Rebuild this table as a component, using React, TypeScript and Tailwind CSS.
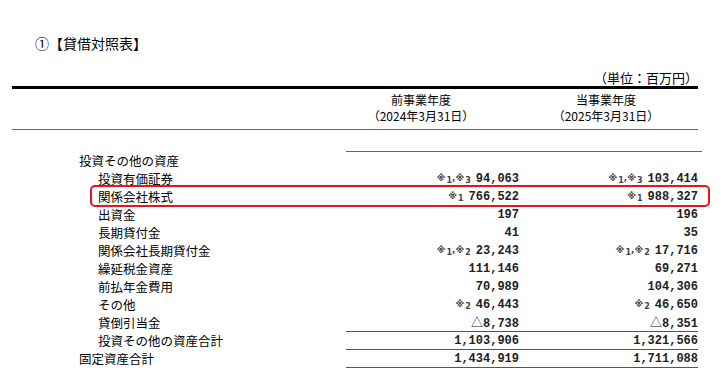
import React from 'react';

type Row = {
  label: string;
  indent?: boolean;
  a?: string;
  an?: string[];
  b?: string;
  bn?: string[];
  line?: boolean;
  mark?: boolean;
};

const rows: Row[] = [
  { label: '投資その他の資産' },
  { label: '投資有価証券', indent: true, a: '94,063', an: ['1', '3'], b: '103,414', bn: ['1', '3'] },
  { label: '関係会社株式', indent: true, a: '766,522', an: ['1'], b: '988,327', bn: ['1'], mark: true },
  { label: '出資金', indent: true, a: '197', b: '196' },
  { label: '長期貸付金', indent: true, a: '41', b: '35' },
  { label: '関係会社長期貸付金', indent: true, a: '23,243', an: ['1', '2'], b: '17,716', bn: ['1', '2'] },
  { label: '繰延税金資産', indent: true, a: '111,146', b: '69,271' },
  { label: '前払年金費用', indent: true, a: '70,989', b: '104,306' },
  { label: 'その他', indent: true, a: '46,443', an: ['2'], b: '46,650', bn: ['2'] },
  { label: '貸倒引当金', indent: true, a: '△8,738', b: '△8,351', line: true },
  { label: '投資その他の資産合計', indent: true, a: '1,103,906', b: '1,321,566', line: true },
  { label: '固定資産合計', a: '1,434,919', b: '1,711,088', line: true },
];

const jp = "font-['Noto_Sans_CJK_JP',sans-serif]";

const Notes = ({ n }: { n?: string[] }) => {
  if (!n) return null;
  return (
    <span className="font-['DejaVu_Sans','Noto_Sans_CJK_JP',sans-serif] text-[9px] text-[#444] mr-[5px]">
      {n.map((x, i) => (
        <span key={i}>
          {i > 0 && ','}
          ※<span className="text-[8px] relative top-[2px] ml-[1px]">{x}</span>
        </span>
      ))}
    </span>
  );
};

const Amount = ({ v }: { v?: string }) => {
  if (!v) return null;
  if (v.startsWith('△')) {
    return (
      <span>
        <span className={`${jp} text-[12px] font-normal`}>△</span>
        {v.slice(1)}
      </span>
    );
  }
  return <span>{v}</span>;
};

export default function App() {
  return (
    <div className={`w-[721px] h-[379px] bg-white text-black overflow-hidden ${jp}`}>
      <div className="pt-[34px] pl-[35px] text-[14px] leading-[18px]">①【貸借対照表】</div>

      <div className="ml-[12px] w-[686px]">
        <div className="mt-[18px] h-[16px] text-right text-[13px] leading-[16px]">（単位：百万円）</div>
        <div className="h-[3px] bg-black" />

        <div className="flex h-[41px] border-b border-[#666] pt-[3px] text-[12px] leading-[16px]">
          <div className="w-[334px]" />
          <div className="w-[176px] pr-[26px] text-center">
            <div>前事業年度</div>
            <div>（2024年3月31日）</div>
          </div>
          <div className="w-[176px] pr-[8px] text-center">
            <div>当事業年度</div>
            <div>（2025年3月31日）</div>
          </div>
        </div>

        <div className="mt-[21px] ml-[334px] w-[356px] h-[1px] bg-[#666]" />

        {rows.map((r, i) => (
          <div key={i} className="relative flex h-[18px] items-center">
            <div className={`w-[334px] text-[12.5px] leading-[18px] ${r.indent ? 'pl-[86px]' : 'pl-[67px]'}`}>
              {r.label}
            </div>
            <div
              className={`w-[176px] h-[18px] flex items-center justify-end pr-[3px] font-['Liberation_Mono',monospace] font-bold text-[12px] text-[#222] ${r.line ? 'border-b border-[#555]' : ''}`}
            >
              <Notes n={r.an} />
              <Amount v={r.a} />
            </div>
            <div
              className={`w-[176px] h-[18px] flex items-center justify-end font-['Liberation_Mono',monospace] font-bold text-[12px] text-[#222] ${r.line ? 'border-b border-[#555]' : ''}`}
            >
              <Notes n={r.bn} />
              <Amount v={r.b} />
            </div>
            {r.mark && (
              <div className="absolute left-[78px] right-[-12px] top-[-3px] bottom-[-1px] border-2 border-[#e8141b] rounded-[5px]" />
            )}
          </div>
        ))}
      </div>
    </div>
  );
}
